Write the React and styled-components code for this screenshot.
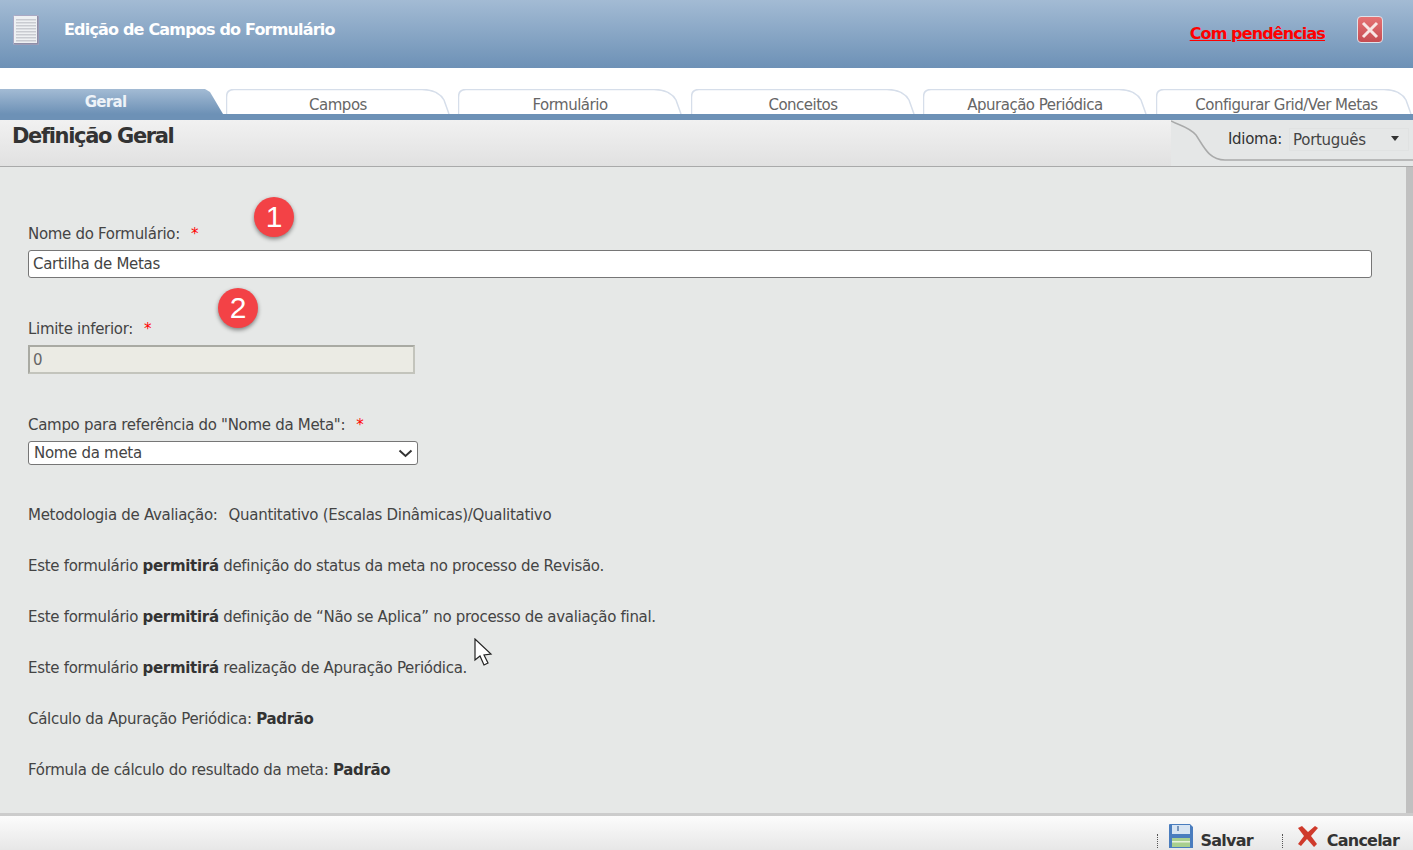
import React from 'react';
import styled, { createGlobalStyle } from 'styled-components';

const GlobalStyle = createGlobalStyle`
  html, body {
    margin: 0;
    padding: 0;
    height: 100%;
    overflow: hidden;
    background: #fff;
  }
  * { box-sizing: border-box; }
  body {
    font-family: "DejaVu Sans", "Liberation Sans", sans-serif;
    font-size: 15px;
    letter-spacing: -0.3px;
    color: #444;
  }
`;

const Page = styled.div`
  position: relative;
  width: 1413px;
  height: 850px;
  display: flex;
  flex-direction: column;
  overflow: hidden;
`;

const Header = styled.header`
  height: 68px;
  flex: none;
  display: flex;
  align-items: flex-start;
  padding: 15px 30px 0 13px;
  background: linear-gradient(#a3bbd4, #6d91b6);
`;

const Title = styled.h1`
  margin: 5px 0 0 25px;
  font-size: 16px;
  line-height: 20px;
  font-weight: bold;
  letter-spacing: -0.82px;
  color: #fff;
  flex: 1;
`;

const Pending = styled.a`
  margin: 9px 32px 0 0;
  font-size: 16px;
  line-height: 20px;
  font-weight: bold;
  letter-spacing: -0.88px;
  color: #f00;
  text-decoration: underline;
`;

const CloseButton = styled.button`
  width: 26px;
  height: 27px;
  margin-top: 1px;
  padding: 0;
  display: flex;
  align-items: center;
  justify-content: center;
  border: 1px solid #dfe3ea;
  border-radius: 4px;
  background: linear-gradient(#e57273, #c64c52);
`;

const TabBar = styled.nav`
  flex: none;
  height: 31px;
  margin-top: 21px;
  display: flex;
  align-items: flex-start;
  border-bottom: 6px solid #6d91b6;
`;

const ActiveTab = styled.div`
  width: 226px;
  height: 25px;
  flex: none;
  padding: 4px 15px 0 0;
  text-align: center;
  font-size: 15px;
  line-height: 18px;
  font-weight: bold;
  letter-spacing: -0.7px;
  color: #eef3f8;
  background: linear-gradient(#a3bbd4, #6d91b6);
  clip-path: polygon(0 0, 205px 0, 210px 3px, 223px 25px, 0 25px);
`;

const Tab = styled.div`
  position: relative;
  isolation: isolate;
  flex: none;
  width: ${p => p.$slot}px;
  height: 25px;
  padding: 7px ${p => p.$slot - p.$width}px 0 ${p => p.$inset}px;
  text-align: center;
  font-size: 15px;
  line-height: 18px;
  letter-spacing: -0.5px;
  color: #666;
`;

const TabEdge = styled.svg`
  position: absolute;
  left: 0;
  top: 0;
  z-index: -1;
`;

const SectionBar = styled.div`
  flex: none;
  height: 47px;
  display: flex;
  justify-content: space-between;
  border-bottom: 1px solid #a9aaaa;
  background: linear-gradient(#f1f1f1, #e1e1e1);
`;

const SectionTitle = styled.h2`
  margin: 3px 0 0 12px;
  font-size: 21px;
  line-height: 27px;
  font-weight: bold;
  letter-spacing: -1.35px;
  color: #333;
`;

const LanguagePanel = styled.div`
  position: relative;
  width: 242px;
  height: 46px;
  display: flex;
  align-items: flex-start;
  padding: 8px 4px 0 57px;
  background: #e5e7e7;
`;

const PanelCurve = styled.svg`
  position: absolute;
  left: 0;
  top: 0;
`;

const LanguageLabel = styled.span`
  position: relative;
  line-height: 22px;
  color: #333;
  margin-right: 7px;
`;

const LanguageSelect = styled.div`
  position: relative;
  flex: 1;
  height: 23px;
  display: flex;
  align-items: center;
  justify-content: space-between;
  padding: 0 9px 0 3px;
  border: 1px solid #e0e2e2;
  color: #444;
`;

const Caret = styled.span`
  width: 0;
  height: 0;
  margin-top: -3px;
  border-left: 4px solid transparent;
  border-right: 4px solid transparent;
  border-top: 5px solid #333;
`;

const Content = styled.main`
  flex: 1;
  display: flex;
  background: #e6e8e7;
`;

const Form = styled.div`
  flex: 1;
  padding: 59px 34px 0 28px;
`;

const Scrollbar = styled.div`
  width: 7px;
  flex: none;
  background: #c0c0c0;
`;

const Field = styled.div`
  position: relative;
  margin-bottom: ${p => p.$gap}px;
`;

const Label = styled.label`
  display: block;
  height: 17px;
  line-height: 17px;
  margin-bottom: ${p => p.$gap}px;
  white-space: nowrap;
`;

const Required = styled.span`
  margin-left: 11px;
  color: #f00;
`;

const TextInput = styled.input`
  display: block;
  width: 100%;
  height: 28px;
  padding: 0 4px;
  font: inherit;
  letter-spacing: inherit;
  color: #444;
  background: #fff;
  border: 1px solid #767676;
  border-radius: 3px;
  outline: none;
`;

const DisabledInput = styled.input`
  display: block;
  width: 387px;
  height: 29px;
  padding: 0 3px;
  font: inherit;
  letter-spacing: inherit;
  color: #666;
  background: #ebebe4;
  border: 2px solid;
  border-color: #a9aaa3 #c3c4bc #c3c4bc #a9aaa3;
  outline: none;
`;

const SelectWrap = styled.div`
  position: relative;
  width: 390px;
`;

const SelectBox = styled.select`
  display: block;
  width: 100%;
  height: 24px;
  padding: 0 0 0 5px;
  font: inherit;
  letter-spacing: inherit;
  color: #444;
  background: #fff;
  border: 1px solid #767676;
  border-radius: 3px;
  outline: none;
  appearance: none;
`;

const SelectArrow = styled.svg`
  position: absolute;
  right: 5px;
  top: 8px;
  pointer-events: none;
`;

const Marker = styled.span`
  position: absolute;
  left: ${p => p.$left}px;
  top: ${p => p.$top}px;
  width: 40px;
  height: 40px;
  display: flex;
  align-items: center;
  justify-content: center;
  border-radius: 50%;
  background: #f34246;
  box-shadow: 0 2px 4px rgba(0, 0, 0, 0.45);
  font-family: "Liberation Sans", sans-serif;
  font-size: 30px;
  letter-spacing: 0;
  color: #fff;
`;

const Info = styled.p`
  margin: 0 0 34px;
  height: 17px;
  line-height: 17px;
  white-space: nowrap;
  &:first-of-type { margin-top: 42px; }
  b { color: #333; }
`;

const Method = styled.span`
  margin-left: 11px;
`;

const Footer = styled.footer`
  flex: none;
  height: 50px;
  display: flex;
  align-items: flex-start;
  justify-content: flex-end;
  padding: 8px 14px 0 0;
  border-top: 3px solid #ccc;
  background: linear-gradient(#fcfcfc, #dfdfdf);
`;

const FooterAction = styled.a`
  display: flex;
  align-items: flex-start;
  margin-left: ${p => p.$gap}px;
  padding-left: ${p => p.$pad}px;
  position: relative;
  font-size: 16px;
  line-height: 20px;
  font-weight: bold;
  letter-spacing: -0.78px;
  color: #333;
  &::before {
    content: "";
    position: absolute;
    left: 0;
    top: 10px;
    height: 14px;
    border-left: 1px dotted #555;
  }
`;

const ActionLabel = styled.span`
  margin: 7px 0 0 8px;
`;

const Pointer = styled.svg`
  position: absolute;
  left: 474px;
  top: 638px;
`;

const FormIcon = () => (
  <svg width="26" height="30" viewBox="0 0 26 30">
    <rect x="0.5" y="0.5" width="25" height="29" rx="1" fill="#eef0f3" stroke="#a9a9c4" />
    <rect x="24" y="1" width="1.5" height="28" fill="#8f8fa8" />
    <rect x="1" y="28" width="24" height="1.5" fill="#8f8fa8" />
    {[4, 7, 10, 13, 16, 19, 22, 25].map(y => (
      <rect key={y} x="3" y={y} width="20" height="1.5" fill="#c9cbd1" />
    ))}
  </svg>
);

const CloseIcon = () => (
  <svg width="20" height="20" viewBox="0 0 20 20">
    <path d="M3 3 L17 17 M17 3 L3 17" stroke="#f8e6e4" strokeWidth="3" fill="none" />
  </svg>
);

const SaveIcon = () => (
  <svg width="24" height="24" viewBox="0 0 24 24">
    <path d="M0 1 Q0 0 1 0 H21 L24 3 V24 H0 Z" fill="#4a7dbe" />
    <rect x="3" y="1" width="18" height="9" fill="#d7e4f2" />
    <rect x="8" y="2" width="2" height="5" fill="#7795bb" />
    <rect x="3" y="14" width="18" height="9" fill="#a8cf8e" />
    <rect x="3" y="17" width="18" height="1.5" fill="#e7f2dd" />
  </svg>
);

const CancelIcon = () => (
  <svg width="22" height="24" viewBox="0 0 22 24">
    <path d="M1 4 L5 2 L11 8 L18 2 L21 4 L14 12 L20 20 L17 23 L10 15 L4 22 L1 20 L7 12 Z" fill="#cf3a2b" />
  </svg>
);

const tabs = [
  { label: 'Campos', width: 224, slot: 232, inset: 0 },
  { label: 'Formulário', width: 224, slot: 233, inset: 0 },
  { label: 'Conceitos', width: 224, slot: 232, inset: 0 },
  { label: 'Apuração Periódica', width: 224, slot: 233, inset: 0 },
  { label: 'Configurar Grid/Ver Metas', width: 256, slot: 257, inset: 5 }
];

const tabPath = w => `M0.5 25 V8 Q0.5 0.5 8 0.5 H${w - 28} Q${w - 12} 0.5 ${w - 6} 11 L${w - 1} 25`;

export default function App() {
  return (
    <Page>
      <GlobalStyle />
      <Header>
        <FormIcon />
        <Title>Edição de Campos do Formulário</Title>
        <Pending>Com pendências</Pending>
        <CloseButton aria-label="Fechar"><CloseIcon /></CloseButton>
      </Header>

      <TabBar>
        <ActiveTab>Geral</ActiveTab>
        {tabs.map(tab => (
          <Tab key={tab.label} $width={tab.width} $slot={tab.slot} $inset={tab.inset}>
            <TabEdge width={tab.width} height="25">
              <path d={tabPath(tab.width)} fill="#fff" stroke="#d6deea" strokeWidth="1.5" />
            </TabEdge>
            {tab.label}
          </Tab>
        ))}
      </TabBar>

      <SectionBar>
        <SectionTitle>Definição Geral</SectionTitle>
        <LanguagePanel>
          <PanelCurve width="242" height="46">
            <path d="M0 1 C10 6 18 7 25 15 C33 27 38 40 54 40 H242" fill="none" stroke="#a9aaaa" strokeWidth="1.5" />
          </PanelCurve>
          <LanguageLabel>Idioma:</LanguageLabel>
          <LanguageSelect>Português<Caret /></LanguageSelect>
        </LanguagePanel>
      </SectionBar>

      <Content>
        <Form>
          <Field $gap={43}>
            <Label $gap={7}>Nome do Formulário:<Required>*</Required></Label>
            <TextInput defaultValue="Cartilha de Metas" />
            <Marker $left={226} $top={-29}>1</Marker>
          </Field>
          <Field $gap={43}>
            <Label $gap={7}>Limite inferior:<Required>*</Required></Label>
            <DisabledInput disabled defaultValue="0" />
            <Marker $left={190} $top={-33}>2</Marker>
          </Field>
          <Field $gap={0}>
            <Label $gap={7}>Campo para referência do "Nome da Meta":<Required>*</Required></Label>
            <SelectWrap>
              <SelectBox defaultValue="Nome da meta">
                <option>Nome da meta</option>
              </SelectBox>
              <SelectArrow width="15" height="9" viewBox="0 0 15 9">
                <path d="M1.5 1.5 L7.5 7 L13.5 1.5" fill="none" stroke="#333" strokeWidth="2" />
              </SelectArrow>
            </SelectWrap>
          </Field>
          <Info>Metodologia de Avaliação:<Method>Quantitativo (Escalas Dinâmicas)/Qualitativo</Method></Info>
          <Info>Este formulário <b>permitirá</b> definição do status da meta no processo de Revisão.</Info>
          <Info>Este formulário <b>permitirá</b> definição de “Não se Aplica” no processo de avaliação final.</Info>
          <Info>Este formulário <b>permitirá</b> realização de Apuração Periódica.</Info>
          <Info>Cálculo da Apuração Periódica: <b>Padrão</b></Info>
          <Info>Fórmula de cálculo do resultado da meta: <b>Padrão</b></Info>
        </Form>
        <Scrollbar />
      </Content>

      <Footer>
        <FooterAction $gap={0} $pad={12}>
          <SaveIcon />
          <ActionLabel>Salvar</ActionLabel>
        </FooterAction>
        <FooterAction $gap={29} $pad={15}>
          <CancelIcon />
          <ActionLabel>Cancelar</ActionLabel>
        </FooterAction>
      </Footer>

      <Pointer width="20" height="30" viewBox="0 0 20 30">
        <path d="M1 1 V22 L6 18 L10 27 L14 25 L10 17 L17 16 Z" fill="#fff" stroke="#222" strokeWidth="1.2" />
      </Pointer>
    </Page>
  );
}
